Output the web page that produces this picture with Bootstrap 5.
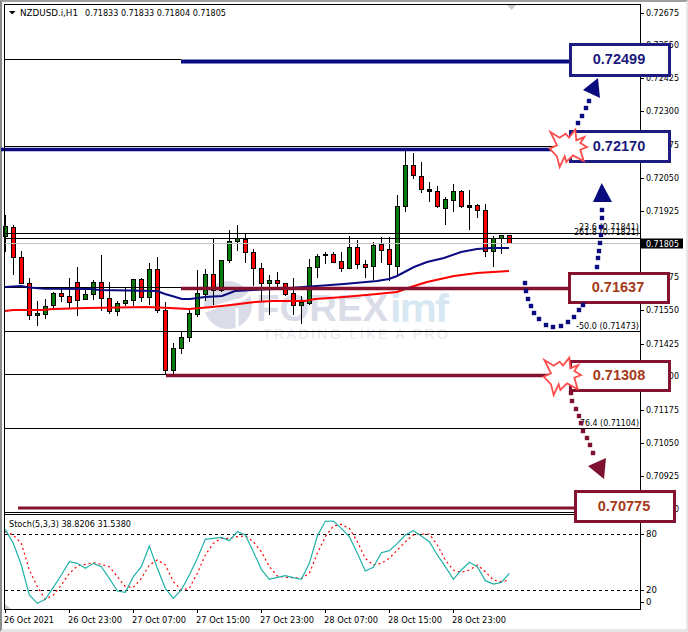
<!DOCTYPE html>
<html lang="en">
<head>
  <meta charset="UTF-8">
  <title>NZDUSD.i,H1</title>
  <meta name="viewport" content="width=device-width, initial-scale=1">
  <link href="https://cdn.jsdelivr.net/npm/bootstrap@5.3.0/dist/css/bootstrap.min.css" rel="stylesheet">
  <style>
    html, body { background: #fff; overflow: hidden; }
    .chart-window {
      width: 688px; height: 632px;
      border-top: 2px solid #a0a0a0;
      border-left: 2px solid #8c8c8c;
      border-bottom: 3px solid #e6e6e6;
      border-right: 2px solid #e6e6e6;
    }
    /* svg layers keep page coordinates, the window borders are offset */
    .layer { position: absolute; left: -2px; top: -2px; width: 688px; height: 632px; }
    .layer-top { z-index: 3; pointer-events: none; }
    svg text { font-family: "DejaVu Sans Condensed", "Liberation Sans", sans-serif; font-size: 9.5px; fill: #000; }
    svg text.wm-big { font-family: "Liberation Sans", sans-serif; font-size: 36px; font-weight: 700; fill: #dadce7; }
    svg text.wm-imf { font-family: "Liberation Sans", sans-serif; font-size: 36px; font-weight: 400; fill: #d8e8f3; stroke: #d8e8f3; stroke-width: 1.5px; }
    svg text.wm-small { font-family: "Liberation Sans", sans-serif; font-size: 14px; fill: #e8e8ee; }
    svg text.price-now { fill: #fff; }
    .level-box {
      position: absolute; z-index: 2;
      font-family: "Liberation Sans", sans-serif; font-size: 14.5px; font-weight: 700;
      border-width: 3px; border-style: solid; padding-right: 2px;
    }
    .level-navy { color: #1a1a7c; border-color: #1b1b80; }
    .level-maroon { color: #a53a18; border-color: #85122e; }
  </style>
</head>
<body class="m-0">

  <div class="chart-window position-relative" id="chart"></div>

  <script src="https://cdn.jsdelivr.net/npm/bootstrap@5.3.0/dist/js/bootstrap.bundle.min.js"></script>
  <script>
    // [color, high, bodyTop, bodyBottom, low] per bar, x = 5.33 + 8 * i
    const bars = [
      ["g",215,226,236,252],["r",225,227,257,275],["r",251,257,283,283],["r",278,283,315,320],
      ["g",301,313,315,326],["g",299,306,314,319],["g",292,293,305,308],["r",289,293,296,302],
      ["r",278,296,302,308],["r",267,282,300,316],["g",290,294,299,300],["g",280,282,294,300],
      ["r",255,282,298,311],["r",282,298,311,314],["g",301,303,311,316],["g",288,300,303,306],
      ["g",279,279,300,306],["r",278,279,297,302],["g",263,269,297,305],["r",257,269,310,313],
      ["r",302,310,370,374],["g",343,348,370,374],["g",332,337,348,354],["g",310,313,337,342],
      ["g",270,293,314,317],["g",269,274,294,301],["r",238,274,290,305],["g",260,260,290,292],
      ["g",230,241,260,263],["g",225,238,241,251],["r",233,239,252,263],["r",249,252,268,286],
      ["r",263,268,283,302],["g",275,280,283,315],["r",272,280,283,287],["r",283,283,294,296],
      ["r",278,293,305,315],["g",296,302,305,324],["g",259,267,303,305],["g",254,256,267,278],
      ["d",252,254,255,264],["r",252,254,262,263],["r",252,261,268,272],["g",236,247,268,269],
      ["r",240,247,264,269],["r",260,264,267,278],["g",242,245,266,280],["r",237,244,250,263],
      ["r",237,249,264,281],["g",195,206,266,275],["g",151,165,206,212],["r",153,165,175,179],
      ["r",162,176,189,193],["d",182,189,191,202],["r",186,191,206,208],["g",197,199,208,225],
      ["g",184,191,200,212],["r",190,191,206,208],["d",190,205,207,230],["r",204,205,210,218],
      ["r",204,210,251,257],["g",236,238,251,267],["g",235,235,238,254],["r",235,235,243,243]
    ];
    const barFill = { g: "#0a7d0a", r: "#ff0000", d: "#000" };

    const navyMa = [[5,287],[21,286],[29,287.5],[45,288.7],[90,289],[100,290],[157,291],[165,294],[172,296],[182,299],[190,299],[205,297],[222,296],[235,291],[253,290],[290,288],[317,286],[344,284],[377,281],[389,279],[397,276],[414,267],[427,262],[444,258],[461,252],[477,249],[491,248],[509,248]];
    const redMa = [[5,311],[13,310],[43,310],[53,309],[87,308],[147,307],[170,308],[189,309],[212,307],[222,306],[239,304],[255,302],[272,301],[305,301],[315,299],[344,297],[377,294],[397,292],[411,287],[427,282],[454,276],[477,273],[509,271]];

    // stochastic values as read off the panel, y = 510 + v / 3
    const stochMain = [58,100,165,255,280,268,232,195,155,160,175,160,170,205,243,247,200,170,108,175,235,265,240,195,145,88,85,82,92,65,75,125,178,208,202,197,203,208,160,78,34,33,55,80,130,183,172,128,122,100,75,62,78,95,135,170,208,180,157,170,212,222,217,190];
    const stochSignal = [65,75,100,180,230,268,255,225,190,168,163,158,163,170,200,230,232,205,165,150,165,215,240,235,190,135,100,85,85,80,78,95,125,170,198,202,203,205,190,130,80,48,43,55,95,145,165,160,145,120,95,75,72,72,105,150,180,187,180,165,185,210,215,210];

    const priceLabels = [["0.72675",12.5],["0.72550",45],["0.72425",78],["0.72300",111],["0.72175",145],["0.72050",178],["0.71925",211],["0.71675",277],["0.71550",310],["0.71425",344],["0.71300",376],["0.71175",410],["0.71050",443],["0.70925",476],["0.70800",509],["100",520],["80",534],["20",590],["0",602]];
    const timeLabels = [["26 Oct 2021",5,50],["26 Oct 23:00",69,54],["27 Oct 07:00",133,54],["27 Oct 15:00",197,54],["27 Oct 23:00",261,54],["28 Oct 07:00",325,54],["28 Oct 15:00",389,54],["28 Oct 23:00",453,54]];
    const fibLabels = [["23.6 (0.71841)",227,60],["261.8 (0.71821)",232,65],["-50.0 (0.71473)",326,63],["76.4 (0.71104)",423,59]];

    const levels = [
      ["0.72499", 569, 43, 102, 34, "level-navy"],
      ["0.72170", 569, 130, 102, 33, "level-navy"],
      ["0.71637", 568, 272, 102, 32, "level-maroon"],
      ["0.71308", 569, 360, 102, 32, "level-maroon"],
      ["0.70775", 574, 490, 102, 33, "level-maroon"]
    ];

    const navyDots = [[578,123],[582,116],[586,108],[589,101],[602,210],[602,218],[601,227],[601,235],[600,243],[599,251],[598,258],[597,267],[525,283],[526,291],[528,299],[531,306],[534,313],[539,319],[546,325],[553,327],[561,326],[568,322],[574,317],[579,310],[583,305]];
    const maroonDots = [[571,393],[572,401],[576,409],[579,416],[581,423],[583,431],[587,438],[590,445],[593,453]];
    const starShape = [[122,305],[150,322],[168,310],[178,322],[197,298],[200,330],[224,320],[212,338],[232,350],[212,358],[222,392],[190,375],[170,395],[165,378],[150,410],[142,378],[120,355],[142,345]];

    const line = (x1, y1, x2, y2, color, w = 1, extra = "") =>
      `<line x1="${x1}" y1="${y1}" x2="${x2}" y2="${y2}" stroke="${color}" stroke-width="${w}" ${extra}/>`;
    const poly = (pts, color, w, extra = "") =>
      `<polyline points="${pts.map(p => p.join(",")).join(" ")}" fill="none" stroke="${color}" stroke-width="${w}" ${extra}/>`;
    const label = (txt, x, y, anchor = "start", cls = "", len = 0) =>
      `<text x="${x}" y="${y + 3.2}" text-anchor="${anchor}" class="${cls}" ${len ? `textLength="${len}" lengthAdjust="spacingAndGlyphs"` : ""}>${txt}</text>`;

    let baseSvg = "";

    // watermark
    baseSvg += `<circle cx="228" cy="305" r="24" fill="#dadce7"/>
      <path d="M204 311 Q226 303 240 300 Q248 298 254 286" fill="none" stroke="#fff" stroke-width="3.5"/>
      <path d="M237 331 L237 308" fill="none" stroke="#fff" stroke-width="3"/>
      <text x="256" y="321" class="wm-big" textLength="132" lengthAdjust="spacingAndGlyphs">FOREX</text>
      <text x="391" y="321" class="wm-imf" textLength="57" lengthAdjust="spacingAndGlyphs">imf</text>
      <text x="263" y="339" class="wm-small" textLength="185">TRADING LIKE A PRO</text>`;

    // candles
    bars.forEach((b, i) => {
      const x = Math.round(5.33 + 8 * i) + 0.5;
      baseSvg += line(x, b[1], x, b[4], "#000");
      baseSvg += `<rect x="${x - 2}" y="${b[2] + 0.5}" width="4" height="${Math.max(b[3] - b[2], 1)}" fill="${barFill[b[0]]}" stroke="#000"/>`;
    });

    // horizontal levels
    [[59.5,4,181],[146.5,4,640],[233.5,4,640],[238.5,4,640],[287.5,4,640],[331.5,4,640],[374.5,4,166],[428.5,4,640]].forEach(h => {
      baseSvg += line(h[1], h[0], h[2], h[0], "#000");
    });
    baseSvg += line(4, 243.5, 640, 243.5, "#c0c0c0");

    // moving averages
    baseSvg += poly(navyMa, "#0b0b80", 2);
    baseSvg += poly(redMa, "#ff0000", 2);

    // trend lines from the level boxes
    baseSvg += line(181, 61.5, 570, 61.5, "#0b0b80", 4);
    baseSvg += line(1, 149.5, 556, 149.5, "#0b0b80", 3.5);
    baseSvg += line(181, 288.5, 570, 288.5, "#85122e", 3.5);
    baseSvg += line(166, 375.5, 552, 375.5, "#85122e", 3.5);
    baseSvg += line(18, 508, 576, 508, "#85122e", 3);

    // frames
    baseSvg += line(4.5, 4, 4.5, 610, "#000");
    baseSvg += line(4, 4.5, 640, 4.5, "#000");
    baseSvg += line(640.5, 4, 640.5, 610, "#000");
    baseSvg += line(4, 512.5, 640, 512.5, "#000");
    baseSvg += line(4, 514.5, 640, 514.5, "#000");
    baseSvg += line(4, 609.5, 641, 609.5, "#000");

    // top markers
    baseSvg += `<polygon points="507,5 516,5 511.5,10" fill="#c8c8c8"/>`;
    baseSvg += `<polygon points="5,604 11,609 5,609" fill="#c8c8c8"/>`;
    baseSvg += `<polygon points="9,11 15.5,11 12.25,14.5" fill="#000"/>`;

    // stochastic panel
    baseSvg += line(5, 534.5, 640, 534.5, "#000", 1, 'stroke-dasharray="3 3"');
    baseSvg += line(5, 590.5, 640, 590.5, "#000", 1, 'stroke-dasharray="3 3"');
    baseSvg += poly(stochSignal.map((v, i) => [5.33 + 8 * i, 510 + v / 3]), "#ff0000", 1.2, 'stroke-dasharray="2 3"');
    baseSvg += poly(stochMain.map((v, i) => [5.33 + 8 * i, 510 + v / 3]), "#20b2aa", 1.2);

    // axes
    priceLabels.forEach(p => {
      baseSvg += line(641, Math.round(p[1]) + 0.5, 644, Math.round(p[1]) + 0.5, "#000");
      baseSvg += label(p[0], 646, p[1], "start", "", p[0].length > 3 ? 33 : 0);
    });
    baseSvg += `<rect x="641" y="238.5" width="42" height="10" fill="#000"/>`;
    baseSvg += label("0.71805", 646, 243.5, "start", "price-now", 33);
    timeLabels.forEach(t => {
      baseSvg += line(t[1] + 0.5, 610, t[1] + 0.5, 613, "#000");
      baseSvg += label(t[0], t[1] - 1, 619.5, "start", "", t[2]);
    });
    fibLabels.forEach(f => { baseSvg += label(f[0], 639 - f[2], f[1], "start", "", f[2]); });

    // header texts
    baseSvg += label("NZDUSD.i,H1", 20, 12.5, "start", "", 58);
    baseSvg += label("0.71833 0.71833 0.71804 0.71805", 85, 12.5, "start", "", 141);
    baseSvg += label("Stoch(5,3,3) 38.8206 31.5380", 9, 524, "start", "", 122);

    // arrows and stars go over the boxes
    const star = (cx, cy) => starShape.map(p => [cx + (p[0] - 175) / 3, cy + (p[1] - 350) / 3].join(",")).join(" ");
    const dot = (p, color) => `<rect x="${p[0] - 2.2}" y="${p[1] - 2.2}" width="4.4" height="4.4" fill="${color}"/>`;
    let overSvg = "";
    navyDots.forEach(p => { overSvg += dot(p, "#0b0b80"); });
    maroonDots.forEach(p => { overSvg += dot(p, "#7d1230"); });
    overSvg += `<polygon points="598,78 583,90 600,98" fill="#0b0b80"/>`;
    overSvg += `<polygon points="601.7,183 593,202 612,202" fill="#0b0b80"/>`;
    overSvg += `<polygon points="606,458 588,466 604,479" fill="#7d1230"/>`;
    overSvg += `<polygon points="${star(568, 147)}" fill="#fff" stroke="#ff4d4d" stroke-width="1.8"/>`;
    overSvg += `<polygon points="${star(562, 375)}" fill="#fff" stroke="#ff4d4d" stroke-width="1.8"/>`;

    let boxes = "";
    levels.forEach(l => {
      boxes += `<div class="level-box ${l[5]} bg-white d-flex align-items-center justify-content-center" style="left:${l[1] - 2}px;top:${l[2] - 2}px;width:${l[3]}px;height:${l[4]}px">${l[0]}</div>`;
    });

    document.getElementById("chart").innerHTML =
      `<svg class="layer" viewBox="0 0 688 632">${baseSvg}</svg>${boxes}<svg class="layer layer-top" viewBox="0 0 688 632">${overSvg}</svg>`;
  </script>

</body>
</html>
